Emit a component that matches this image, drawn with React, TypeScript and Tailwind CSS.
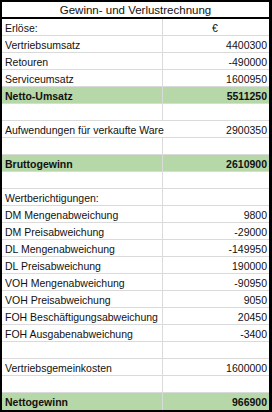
type Row = { label?: string; value?: string; green?: boolean; center?: boolean; overflow?: boolean };

const rows: Row[] = [
  { label: "Erlöse:", value: "€", center: true },
  { label: "Vertriebsumsatz", value: "4400300" },
  { label: "Retouren", value: "-490000" },
  { label: "Serviceumsatz", value: "1600950" },
  { label: "Netto-Umsatz", value: "5511250", green: true },
  {},
  { label: "Aufwendungen für verkaufte Ware", value: "2900350", overflow: true },
  {},
  { label: "Bruttogewinn", value: "2610900", green: true },
  {},
  { label: "Wertberichtigungen:" },
  { label: "DM Mengenabweichung", value: "9800" },
  { label: "DM Preisabweichung", value: "-29000" },
  { label: "DL Mengenabweichung", value: "-149950" },
  { label: "DL Preisabweichung", value: "190000" },
  { label: "VOH Mengenabweichung", value: "-90950" },
  { label: "VOH Preisabweichung", value: "9050" },
  { label: "FOH Beschäftigungsabweichung", value: "20450" },
  { label: "FOH Ausgabenabweichung", value: "-3400" },
  {},
  { label: "Vertriebsgemeinkosten", value: "1600000" },
  {},
  { label: "Nettogewinn", value: "966900", green: true },
];

export default function App() {
  return (
    <div className="w-[272px] h-[412px] bg-white font-['Liberation_Sans',Arial,sans-serif] text-[#111] overflow-hidden">
      <div className="flex flex-col h-full border-t-2 border-l-2 border-r-[3px] border-b-[3px] border-black">
        <div className="h-[17px] border-b-2 border-black flex justify-center pt-px text-[11.5px] leading-[15px]">
          Gewinn- und Verlustrechnung
        </div>
        {rows.map((r, i) => {
          const last = i === rows.length - 1;
          return (
            <div
              key={i}
              className={`flex h-[17px] shrink-0 text-[10.5px] leading-[14px] ${last ? "h-4" : "border-b border-[#dadada]"} ${r.green ? "bg-[#b6d7a8] font-bold" : ""}`}
            >
              <div
                className={`w-[161px] shrink-0 pl-[3px] pt-[2px] whitespace-nowrap ${r.overflow ? "overflow-visible" : "overflow-hidden border-r border-[#dadada]"}`}
              >
                {r.label}
              </div>
              <div
                className={`flex-1 pr-[2px] pt-[2px] whitespace-nowrap ${r.center ? "text-center" : "text-right"} ${r.overflow ? "pl-px" : ""}`}
              >
                {r.value}
              </div>
            </div>
          );
        })}
      </div>
    </div>
  );
}
